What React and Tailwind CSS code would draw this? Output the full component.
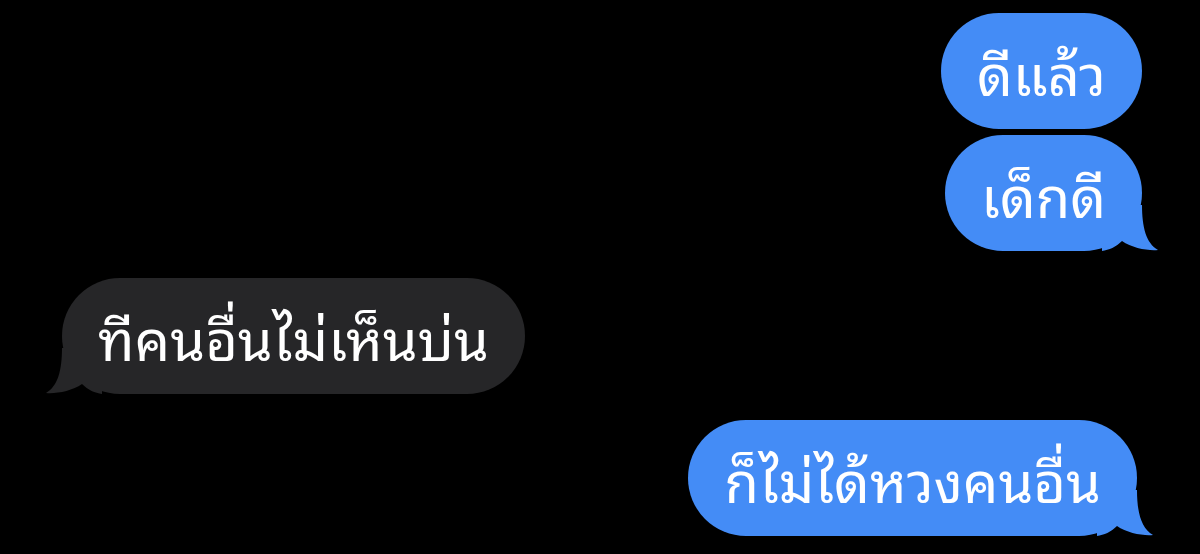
import React from "react";

const Tail = ({ side, color }) =>
  side === "right" ? (
    <svg
      className="absolute bottom-0 right-[-16px]"
      width="56"
      height="46"
      viewBox="0 0 56 46"
    >
      <path d="M0 0 H40 C40 22 44 38 56 45 C46 46 30 43 20 36 C14 42 7 45 0 46 Z" fill={color} />
    </svg>
  ) : (
    <svg
      className="absolute bottom-0 left-[-16px]"
      width="56"
      height="46"
      viewBox="0 0 56 46"
    >
      <path d="M56 0 H16 C16 22 12 38 0 45 C10 46 26 43 36 36 C42 42 49 45 56 46 Z" fill={color} />
    </svg>
  );

const Bubble = ({ text, sent, tail }) => (
  <div
    className={`relative flex h-[116px] items-center rounded-[58px] px-[36px] text-[56px] text-white ${
      sent ? "bg-[#448cf6]" : "bg-[#262628]"
    }`}
  >
    <span className="relative z-10 leading-none">{text}</span>
    {tail && <Tail side={sent ? "right" : "left"} color={sent ? "#448cf6" : "#262628"} />}
  </div>
);

export default function App() {
  return (
    <div
      className="flex h-[554px] w-[1200px] flex-col bg-black pt-[13px]"
      style={{ fontFamily: '"Noto Sans Thai Looped", Loma, Garuda, Norasi, "Noto Sans", "Noto Sans Thai", sans-serif' }}
    >
      <div className="flex flex-col items-end gap-[6px] pr-[58px]">
        <Bubble text="ดีแล้ว" sent />
        <Bubble text="เด็กดี" sent tail />
      </div>
      <div className="mt-[27px] flex pl-[62px]">
        <Bubble text="ทีคนอื่นไม่เห็นบ่น" tail />
      </div>
      <div className="mt-[26px] flex justify-end pr-[63px]">
        <Bubble text="ก็ไม่ได้หวงคนอื่น" sent tail />
      </div>
    </div>
  );
}
